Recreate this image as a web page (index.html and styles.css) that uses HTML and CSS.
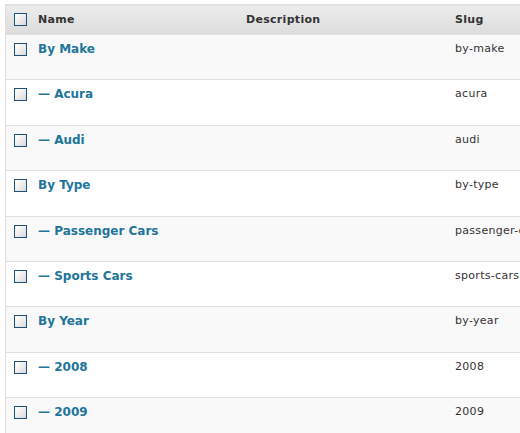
FILE: index.html
```html
<!DOCTYPE html>
<html lang="en">
<head>
    <meta charset="UTF-8">
    <title>Categories</title>
    <link rel="stylesheet" href="styles.css">
</head>
<body>
    <table class="widefat">
        <thead>
            <tr>
                <th class="check-column"><span class="cb"></span></th>
                <th class="col-name">Name</th>
                <th class="col-desc">Description</th>
                <th class="col-slug">Slug</th>
            </tr>
        </thead>
        <tbody>
            <tr class="alt">
                <td class="check-column"><span class="cb"></span></td>
                <td class="col-name"><a href="#">By Make</a></td>
                <td class="col-desc"></td>
                <td class="col-slug">by-make</td>
            </tr>
            <tr>
                <td class="check-column"><span class="cb"></span></td>
                <td class="col-name"><a href="#">&mdash; Acura</a></td>
                <td class="col-desc"></td>
                <td class="col-slug">acura</td>
            </tr>
            <tr class="alt">
                <td class="check-column"><span class="cb"></span></td>
                <td class="col-name"><a href="#">&mdash; Audi</a></td>
                <td class="col-desc"></td>
                <td class="col-slug">audi</td>
            </tr>
            <tr>
                <td class="check-column"><span class="cb"></span></td>
                <td class="col-name"><a href="#">By Type</a></td>
                <td class="col-desc"></td>
                <td class="col-slug">by-type</td>
            </tr>
            <tr class="alt">
                <td class="check-column"><span class="cb"></span></td>
                <td class="col-name"><a href="#">&mdash; Passenger Cars</a></td>
                <td class="col-desc"></td>
                <td class="col-slug">passenger-cars</td>
            </tr>
            <tr>
                <td class="check-column"><span class="cb"></span></td>
                <td class="col-name"><a href="#">&mdash; Sports Cars</a></td>
                <td class="col-desc"></td>
                <td class="col-slug">sports-cars</td>
            </tr>
            <tr class="alt">
                <td class="check-column"><span class="cb"></span></td>
                <td class="col-name"><a href="#">By Year</a></td>
                <td class="col-desc"></td>
                <td class="col-slug">by-year</td>
            </tr>
            <tr>
                <td class="check-column"><span class="cb"></span></td>
                <td class="col-name"><a href="#">&mdash; 2008</a></td>
                <td class="col-desc"></td>
                <td class="col-slug">2008</td>
            </tr>
            <tr class="alt">
                <td class="check-column"><span class="cb"></span></td>
                <td class="col-name"><a href="#">&mdash; 2009</a></td>
                <td class="col-desc"></td>
                <td class="col-slug">2009</td>
            </tr>
        </tbody>
    </table>
</body>
</html>
```

FILE: styles.css
```css
html, body {
    overflow: hidden;
}
body {
    margin: 4px 0 0 5px;
    font-family: "DejaVu Sans", Verdana, sans-serif;
    font-size: 11px;
    color: #333;
    background: #fff;
}
.widefat {
    width: 640px;
    border-collapse: collapse;
    border-top: 1px solid #dfdfdf;
    border-left: 1px solid #dfdfdf;
    table-layout: fixed;
}
.widefat th,
.widefat td {
    padding: 0;
    text-align: left;
    vertical-align: top;
}
.widefat thead th {
    height: 29px;
    background: linear-gradient(to bottom, #ececec, #dcdcdc);
    font-weight: bold;
    letter-spacing: 0.3px;
    line-height: 29px;
    border-bottom: 1px solid #dfdfdf;
}
.widefat tbody tr {
    background: #fff;
}
.widefat tbody tr.alt {
    background: #f9f9f9;
}
.widefat tbody td {
    height: 45.4px;
    border-bottom: 1px solid #dfdfdf;
    padding-top: 7px;
    box-sizing: border-box;
}
.check-column {
    width: 32px;
}
.col-name {
    width: 208px;
}
.col-desc {
    width: 209px;
}
.cb {
    display: block;
    width: 11px;
    height: 11px;
    margin-left: 8px;
    border: 1px solid #1f4f7c;
    background: linear-gradient(135deg, #ffffff 0%, #f2f2f2 40%, #d8d8d8 100%);
}
thead .cb {
    margin-top: 8px;
}
tbody .cb {
    margin-top: 1px;
}
.col-name a {
    color: #21759b;
    font-size: 12px;
    font-weight: bold;
    text-decoration: none;
    line-height: 14px;
}
tbody .col-slug {
    line-height: 14px;
    letter-spacing: 0.3px;
}
```
